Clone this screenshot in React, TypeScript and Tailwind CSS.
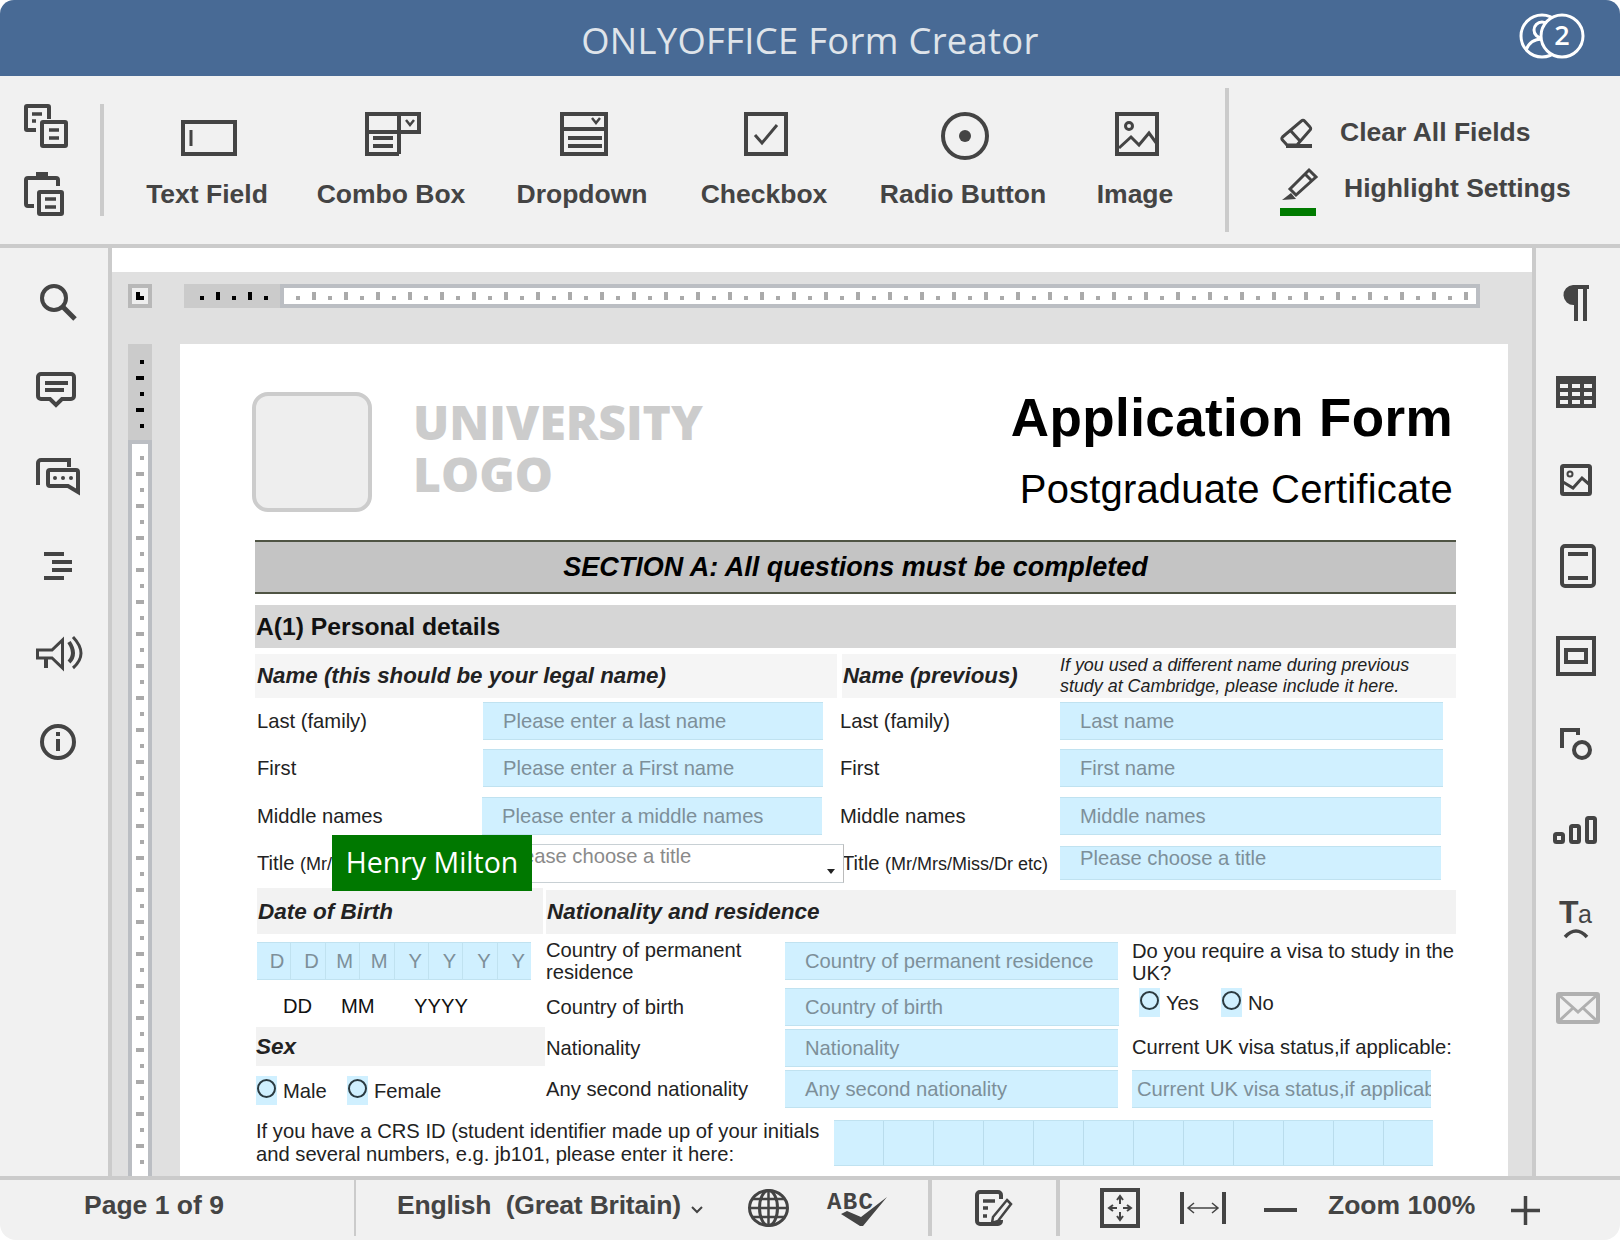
import React from 'react';

const sans = "font-['Liberation_Sans',Arial,sans-serif]";
const open = "font-['Open_Sans',sans-serif]";
const toolLabel = 'text-[26.5px] leading-[32px] font-bold text-[#444] whitespace-nowrap';

const Icon: React.FC<{ w: number; h: number; className?: string; children: React.ReactNode }> = ({ w, h, className, children }) => (
  <svg width={w} height={h} viewBox={`0 0 ${w} ${h}`} fill="none" stroke="#444" strokeWidth={4} className={`block shrink-0 overflow-visible ${className ?? ''}`}>
    {children}
  </svg>
);

const Field: React.FC<{ text?: string; className: string; textClass?: string }> = ({ text, className, textClass }) => (
  <div className={`h-[38px] flex items-center bg-[#d0f0ff] border-y border-[#c0e2f0] text-[20.2px] text-[#7d8f99] whitespace-nowrap overflow-hidden shrink-0 ${className} ${textClass ?? 'pl-5'}`}>
    {text}
  </div>
);

const Radio: React.FC<{ label: string; gap: string }> = ({ label, gap }) => (
  <div className={`flex items-center ${gap}`}>
    <div className="w-[21px] h-[29px] bg-[#d0f0ff] flex items-center justify-center shrink-0">
      <div className="w-[19px] h-[19px] rounded-full border-2 border-[#2b3a40] -mt-1" />
    </div>
    <span className="ml-[6px] text-[20.2px] text-[#222] mt-[1px]">{label}</span>
  </div>
);

const Ticks: React.FC<{ count: number; color: string; vertical?: boolean }> = ({ count, color, vertical }) => (
  <>
    {Array.from({ length: count }, (_, i) => (
      <div
        key={i}
        className="shrink-0"
        style={
          vertical
            ? { width: i % 2 ? 8 : 4, height: 4, background: color }
            : { width: 4, height: i % 2 ? 8 : 4, background: color }
        }
      />
    ))}
  </>
);

const ToolButton: React.FC<{ label: string; width: string; icon: React.ReactNode }> = ({ label, width, icon }) => (
  <div className={`flex flex-col items-center shrink-0 ${width}`}>
    <div className="h-[44px] flex items-end justify-center pl-[3px]">{icon}</div>
    <div className="mt-[22px]">
      <span className={toolLabel}>{label}</span>
    </div>
  </div>
);

const leftIcons = [
  <Icon w={36} h={36} key="search"><circle cx="14" cy="14" r="12" /><path d="M22.5 22.5L35 35" strokeWidth={5} /></Icon>,
  <Icon w={40} h={36} className="-ml-1" key="comment">
    <path d="M5 2h30a3 3 0 0 1 3 3v19a3 3 0 0 1-3 3h-9l-6 6-6-6H5a3 3 0 0 1-3-3V5a3 3 0 0 1 3-3z" />
    <path d="M9 11h23M9 18h19" />
  </Icon>,
  <Icon w={44} h={40} key="chat">
    <path d="M2 27V5a3 3 0 0 1 3-3h28v7" />
    <path d="M12 14a2 2 0 0 1 2-2h26a2 2 0 0 1 2 2v20l-10-6H14a2 2 0 0 1-2-2z" />
    <circle cx="19" cy="20" r="2" fill="#444" stroke="none" />
    <circle cx="27" cy="20" r="2" fill="#444" stroke="none" />
    <circle cx="35" cy="20" r="2" fill="#444" stroke="none" />
  </Icon>,
  <Icon w={28} h={28} key="nav"><path d="M0 2h20M8 10h20M8 18h20M0 26h20" /></Icon>,
  <Icon w={48} h={36} className="ml-1" key="speaker">
    <path d="M1.5 14H16L26.5 4V32L16 22H1.5Z" strokeWidth={3} strokeLinejoin="miter" />
    <path d="M10 22V32" strokeWidth={4} />
    <path d="M33 6Q41 18 33 26" strokeWidth={4} />
    <path d="M37 1Q53 18 37 32" strokeWidth={3} />
  </Icon>,
  <Icon w={36} h={36} key="info">
    <circle cx="18" cy="18" r="16" />
    <path d="M18 8v4M18 15v12" />
  </Icon>,
];

const rightIcons = [
  <Icon w={28} h={36} className="-ml-[6px] -mt-[3px]" key="para">
    <path d="M12 0H28V4H26V36H22V4H17V36H13V20A10 10 0 0 1 12 0Z" fill="#444" stroke="none" />
  </Icon>,
  <Icon w={40} h={32} className="-ml-1" key="table">
    <path fillRule="evenodd" d="M0 0H40V32H0ZM4 8V12H12V8ZM16 8V12H24V8ZM28 8V12H36V8ZM4 16V20H12V16ZM16 16V20H24V16ZM28 16V20H36V16ZM4 24V28H12V24ZM16 24V28H24V24ZM28 24V28H36V24Z" fill="#444" stroke="none" />
  </Icon>,
  <Icon w={32} h={32} className="-ml-1" key="image">
    <rect x="2" y="2" width="28" height="28" rx="1.5" />
    <circle cx="10" cy="10" r="2.5" strokeWidth={2} />
    <path d="M3 18L13 24L22 14L30 21" strokeWidth={3} />
  </Icon>,
  <Icon w={36} h={44} className="-mt-[4px]" key="header">
    <rect x="2" y="2" width="32" height="40" rx="3" />
    <path d="M8 10H28M8 34H28" />
  </Icon>,
  <Icon w={40} h={40} className="-ml-1" key="frame">
    <rect x="2" y="2" width="36" height="36" />
    <rect x="10" y="14" width="20" height="12" />
  </Icon>,
  <Icon w={32} h={32} className="-ml-1" key="shape">
    <path d="M2 20V2H18V7" />
    <circle cx="22" cy="22" r="8" />
  </Icon>,
  <Icon w={44} h={28} className="-ml-[7px] -mt-[5px]" key="chart">
    <rect x="2" y="18" width="8" height="8" rx="1.5" />
    <rect x="18" y="10" width="8" height="16" rx="1.5" />
    <rect x="34" y="2" width="8" height="24" rx="1.5" />
  </Icon>,
  <Icon w={32} h={40} className="-ml-1 -mt-[4px]" key="ta">
    <text x="-1" y="25" fontSize="32" fontWeight="700" fill="#444" stroke="none" className={sans}>T</text>
    <text x="18" y="25" fontSize="25" fill="#444" stroke="none" className={sans}>a</text>
    <path d="M5 39Q16 27 27 39" strokeWidth={3.5} />
  </Icon>,
  <Icon w={44} h={32} key="mail">
    <g stroke="#b0b0b0">
      <rect x="2" y="2" width="40" height="28" rx="1" />
      <path d="M3 3L22 20L41 3M3 29L17 16M41 29L27 16" strokeWidth={3} />
    </g>
  </Icon>,
];

export default function App() {
  return (
    <div className={`w-[1624px] h-[1240px] bg-white overflow-hidden ${sans}`}>
      <div className="w-[1620px] h-full flex flex-col rounded-t-[14px] rounded-b-[16px] overflow-hidden">
        {/* Title */}
        <div className="h-[76px] bg-[#486a95] flex items-center justify-center relative shrink-0">
          <span className={`${open} font-medium text-[36.4px] text-[#dfe4ea] tracking-[0.3px] mt-[4px]`}>ONLYOFFICE Form Creator</span>
          <svg width="66" height="46" viewBox="0 0 66 46" fill="none" stroke="#fff" strokeWidth="3" className="absolute right-[35px] top-[13px]">
            <circle cx="23" cy="23" r="21" />
            <circle cx="23" cy="17" r="8" />
            <path d="M7 37c3-8 9-11 16-11s12 3 15 9" />
            <circle cx="43" cy="23" r="21" fill="#486a95" />
            <text x="43" y="32" fontSize="27" fontWeight="600" textAnchor="middle" fill="#fff" stroke="none" className={open}>2</text>
          </svg>
        </div>

        {/* Toolbar */}
        <div className="h-[172px] bg-[#f1f1f1] border-b-4 border-[#cbcbcb] flex shrink-0">
          <div className="w-[100px] pt-[28px] pl-[24px] shrink-0">
            <Icon w={44} h={44}>
              <path d="M12 26H3a1 1 0 0 1-1-1V3a1 1 0 0 1 1-1h21a1 1 0 0 1 1 1v12" />
              <rect x="18" y="18" width="24" height="24" rx="1" />
              <path d="M8 10H18M8 17H12M25 26H35M25 34H35" strokeWidth={3.5} />
            </Icon>
            <Icon w={40} h={44} className="mt-[24px]">
              <path d="M10 34H4a2 2 0 0 1-2-2V8a2 2 0 0 1 2-2h28a2 2 0 0 1 2 2v6M12 2H24" />
              <rect x="15" y="20" width="23" height="22" rx="1" />
              <path d="M21 27H32M21 35H32" strokeWidth={3.5} />
            </Icon>
          </div>
          <div className="w-1 h-[112px] mt-[28px] bg-[#cbcbcb] shrink-0" />
          <div className="flex ml-[13px] pt-[36px]">
            <ToolButton
              label="Text Field"
              width="w-[180px]"
              icon={
                <Icon w={56} h={36}>
                  <rect x="2" y="2" width="52" height="32" />
                  <path d="M10 10V26" strokeWidth={3} />
                </Icon>
              }
            />
            <ToolButton
              label="Combo Box"
              width="w-[188px]"
              icon={
                <Icon w={56} h={44}>
                  <path d="M34 42H2V2H54V20H2M34 2V42" />
                  <path d="M8 26H28M8 34H28" />
                  <path d="M41 8L45 13L49 8" strokeWidth={2.5} />
                </Icon>
              }
            />
            <ToolButton
              label="Dropdown"
              width="w-[194px]"
              icon={
                <Icon w={48} h={44}>
                  <rect x="2" y="2" width="44" height="40" />
                  <path d="M2 17H46M8 26H42M8 34H42" />
                  <path d="M32 6L36 11L40 6" strokeWidth={2.5} />
                </Icon>
              }
            />
            <ToolButton
              label="Checkbox"
              width="w-[170px]"
              icon={
                <Icon w={44} h={44}>
                  <rect x="2" y="2" width="40" height="40" />
                  <path d="M11 23L18 31L33 13" strokeWidth={3} />
                </Icon>
              }
            />
            <ToolButton
              label="Radio Button"
              width="w-[228px]"
              icon={
                <Icon w={48} h={48} className="-mb-1">
                  <circle cx="24" cy="24" r="22" />
                  <circle cx="24" cy="24" r="6" fill="#444" stroke="none" />
                </Icon>
              }
            />
            <ToolButton
              label="Image"
              width="w-[116px]"
              icon={
                <Icon w={44} h={44}>
                  <rect x="2" y="2" width="40" height="40" />
                  <circle cx="14" cy="14" r="3.5" strokeWidth={3} />
                  <path d="M4 36L16 25L24 33L34 21L42 32" strokeWidth={3} />
                </Icon>
              }
            />
          </div>
          <div className="w-1 h-[144px] mt-[12px] ml-[32px] bg-[#cbcbcb] shrink-0" />
          <div className="pl-[52px] pt-[42px]">
            <div className="flex items-center h-[30px]">
              <Icon w={32} h={30} className="-ml-px">
                <path d="M21.5 3a2 2 0 0 1 3 0L30 9a2 2 0 0 1 0 3L17 27H7L2.5 22a2 2 0 0 1 0-3Z" strokeWidth={3} />
                <path d="M10 12L20 23" strokeWidth={3} />
                <path d="M6 28H32" strokeWidth={4} />
              </Icon>
              <span className={`${toolLabel} ml-[28px] -mt-[2px]`}>Clear All Fields</span>
            </div>
            <div className="flex h-[32px] mt-[20px] ml-[3px]">
              <Icon w={36} h={32} className="-ml-[2px]">
                <path d="M27 2L34 9L14 27L8 21Z" strokeWidth={3} />
                <path d="M23 6L30 13" strokeWidth={3} />
                <path d="M0 32L9 25L14 31Z" fill="#444" stroke="none" />
              </Icon>
              <span className={`${toolLabel} ml-[26px] mt-[4px]`}>Highlight Settings</span>
            </div>
            <div className="w-[36px] h-2 bg-[#007b00] mt-2 -ml-px" />
          </div>
        </div>

        {/* Middle */}
        <div className="h-[928px] flex shrink-0 overflow-hidden">
          <div className="w-[112px] bg-[#f1f1f1] border-r-4 border-[#cbcbcb] pt-[10px] shrink-0">
            {leftIcons.map((icon, i) => (
              <div key={i} className="h-[88px] flex items-center justify-center pl-2">
                {icon}
              </div>
            ))}
          </div>

          <div className="w-[1420px] flex flex-col shrink-0">
            <div className="h-6 bg-white shrink-0" />
            <div className="flex-1 bg-[#e0e0e0] flex flex-col min-h-0">
              {/* Horizontal ruler */}
              <div className="flex h-6 mt-3 ml-4 shrink-0">
                <div className="w-6 h-6 bg-[#b8b8b8] p-1">
                  <div className="w-4 h-4 bg-[#eee] relative">
                    <svg width="16" height="16" viewBox="0 0 16 16" className="block">
                      <path d="M4 4H8V8H12V12H4Z" fill="#000" />
                    </svg>
                  </div>
                </div>
                <div className="ml-8 w-24 h-6 bg-[#cbcbcb] flex items-end gap-3 pl-4 pb-2">
                  <Ticks count={5} color="#000" />
                </div>
                <div className="w-[1200px] h-6 bg-white border-4 border-[#bbbec3] flex items-end gap-3 pl-3 pb-1 overflow-hidden">
                  <Ticks count={74} color="#aaa" />
                </div>
              </div>

              <div className="flex mt-9 ml-4 flex-1 min-h-0">
                {/* Vertical ruler */}
                <div className="w-6 flex flex-col shrink-0">
                  <div className="h-24 bg-[#cbcbcb] flex flex-col items-end gap-3 pt-4 pr-2 shrink-0">
                    <Ticks count={5} color="#000" vertical />
                  </div>
                  <div className="flex-1 min-h-0 bg-white border-x-4 border-t-4 border-[#bbbec3] flex flex-col items-end gap-3 pt-3 pr-1 overflow-hidden">
                    <Ticks count={45} color="#aaa" vertical />
                  </div>
                </div>

                {/* Page */}
                <div className="w-[1328px] ml-7 bg-white pl-[72px] pt-12 overflow-hidden shrink-0">
                  <div className="flex h-[120px] w-[1208px]">
                    <div className="w-[120px] h-[120px] rounded-2xl border-4 border-[#ccc] bg-[#eee] shrink-0" />
                    <div className={`ml-[41px] ${open} font-extrabold text-[48px] leading-[52px] text-[#ccc] pt-[4px]`}>
                      <div>UNIVERSITY</div>
                      <div>LOGO</div>
                    </div>
                    <div className="ml-auto pr-[7px] text-right">
                      <div className="text-[53px] leading-[60px] font-bold text-black -mt-[4px] tracking-[0.4px]">Application Form</div>
                      <div className="text-[40px] leading-[46px] text-black mt-[18px] tracking-[0.17px]">Postgraduate Certificate</div>
                    </div>
                  </div>

                  <div className="ml-[3px] w-[1201px]">
                    <div className="mt-7 h-[54px] pt-px bg-[#c4c4c4] border-y-2 border-[#4f5444] flex items-center justify-center text-[27px] font-bold italic text-black">
                      SECTION A: All questions must be completed
                    </div>
                    <div className="mt-[11px] h-[43px] bg-[#d6d6d6] flex items-center pl-px pt-px text-[24.7px] font-bold text-[#111]">
                      A(1) Personal details
                    </div>

                    {/* Name headers */}
                    <div className="mt-[6px] h-[44px] flex gap-[5px] text-[22.3px] font-bold italic text-[#222]">
                      <div className="w-[582px] bg-[#f5f5f5] flex items-center pl-[2px]">Name (this should be your legal name)</div>
                      <div className="w-[614px] bg-[#f5f5f5] flex items-center pl-px">
                        <span className="w-[217px] shrink-0">Name (previous)</span>
                        <span className="text-[17.9px] leading-[21px] font-normal">
                          If you used a different name during previous
                          <br />
                          study at Cambridge, please include it here.
                        </span>
                      </div>
                    </div>

                    {/* Name rows */}
                    <div className="mt-[4px] ml-[2px] flex flex-col text-[20.2px] text-[#222]">
                      <div className="flex items-center">
                        <span className="w-[226px] shrink-0">Last (family)</span>
                        <Field text="Please enter a last name" className="w-[340px]" />
                        <span className="w-[220px] ml-[17px] shrink-0">Last (family)</span>
                        <Field text="Last name" className="w-[383px]" />
                      </div>
                      <div className="flex items-center mt-[9px]">
                        <span className="w-[226px] shrink-0">First</span>
                        <Field text="Please enter a First name" className="w-[340px]" />
                        <span className="w-[220px] ml-[17px] shrink-0">First</span>
                        <Field text="First name" className="w-[383px]" />
                      </div>
                      <div className="flex items-center mt-[10px]">
                        <span className="w-[225px] shrink-0">Middle names</span>
                        <Field text="Please enter a middle names" className="w-[340px]" />
                        <span className="w-[220px] ml-[18px] shrink-0">Middle names</span>
                        <Field text="Middle names" className="w-[381px]" />
                      </div>
                    </div>

                    {/* Title row */}
                    <div className="mt-[9px] ml-[2px] flex h-[39px] relative text-[20.2px] text-[#222]">
                      <span className="w-[226px] shrink-0 leading-[39px]">
                        Title <span className="text-[18px]">(Mr/Mrs/Miss/Dr etc)</span>
                      </span>
                      <div className="w-[361px] h-[39px] bg-white border border-[#c8d0d4] border-x-0 border-r border-r-[#bbb] pl-[22px] text-[#8a8a8a] relative leading-[22px] shrink-0">
                        Please choose a title
                        <svg width="8" height="5" viewBox="0 0 8 5" className="absolute right-[8px] bottom-[8px]">
                          <path d="M0 0H8L4 5Z" fill="#222" />
                        </svg>
                      </div>
                      <span className="w-[218px] shrink-0 leading-[39px] -ml-[2px]">
                        Title <span className="text-[18px]">(Mr/Mrs/Miss/Dr etc)</span>
                      </span>
                      <div className="w-[381px] h-[34px] mt-[2px] bg-[#d0f0ff] border-y border-[#c0e2f0] pl-5 text-[#7d8f99] leading-[22px] shrink-0">
                        Please choose a title
                      </div>
                      <div className={`absolute left-[75px] -top-[9px] w-[200px] h-[56px] bg-[#007800] pb-[2px] ${open} text-[28.5px] text-white flex items-center justify-center`}>
                        Henry Milton
                      </div>
                    </div>

                    {/* Second headers */}
                    <div className="mt-[5px] h-[46px] flex text-[22.5px] font-bold italic text-[#222]">
                      <div className="w-[286px] ml-[2px] pt-[2px] bg-[#f2f2f2] flex items-center pl-px shrink-0">Date of Birth</div>
                      <div className="flex-1 ml-[3px] mt-[2px] bg-[#f2f2f2] flex items-center pl-px">Nationality and residence</div>
                    </div>

                    {/* Three columns */}
                    <div className="mt-2 flex text-[20.2px] text-[#222]">
                      <div className="w-[291px] shrink-0">
                        <div className="ml-[2px] w-[274px] h-[38px] bg-[#d0f0ff] border-y border-[#c0e2f0] flex text-[#7d8f99]">
                          {['D', 'D', 'M', 'M', 'Y', 'Y', 'Y', 'Y'].map((c, i) => (
                            <div key={i} className="flex-1 flex items-center justify-end pr-[6px] border-r border-[#c0e2f0] last:border-r-0">
                              {c}
                            </div>
                          ))}
                        </div>
                        <div className="h-[47px] flex items-center pt-[5px] pl-[28px] text-[#111]">
                          <span className="w-[58px]">DD</span>
                          <span className="w-[73px]">MM</span>
                          <span>YYYY</span>
                        </div>
                        <div className="ml-px w-[289px] h-[39px] pt-px bg-[#f2f2f2] flex items-center text-[22.5px] font-bold italic">Sex</div>
                        <div className="mt-[9px] ml-px flex">
                          <Radio label="Male" gap="w-[91px]" />
                          <Radio label="Female" gap="" />
                        </div>
                      </div>

                      <div className="w-[586px] shrink-0 flex flex-col">
                        <div className="flex items-center h-[38px]">
                          <span className="w-[239px] leading-[22px] shrink-0 -mt-px">Country of permanent residence</span>
                          <Field text="Country of permanent residence" className="w-[333px]" />
                        </div>
                        <div className="flex items-center h-[38px] mt-2">
                          <span className="w-[239px] shrink-0">Country of birth</span>
                          <Field text="Country of birth" className="w-[334px]" />
                        </div>
                        <div className="flex items-center h-[38px] mt-[3px]">
                          <span className="w-[239px] shrink-0">Nationality</span>
                          <Field text="Nationality" className="w-[333px]" />
                        </div>
                        <div className="flex items-center h-[38px] mt-[3px]">
                          <span className="w-[239px] shrink-0">Any second nationality</span>
                          <Field text="Any second nationality" className="w-[333px]" />
                        </div>
                      </div>

                      <div className="flex-1 min-w-0 flex flex-col">
                        <div className="leading-[22px] h-[47px] -mt-[2px] whitespace-nowrap">
                          Do you require a visa to study in the
                          <br />
                          UK?
                        </div>
                        <div className="flex ml-[7px]">
                          <Radio label="Yes" gap="w-[82px]" />
                          <Radio label="No" gap="" />
                        </div>
                        <div className="h-[39px] mt-[9px] flex items-center whitespace-nowrap">Current UK visa status,if applicable:</div>
                        <Field text="Current UK visa status,if applicable:" className="w-[299px] mt-1" textClass="pl-[5px]" />
                      </div>
                    </div>

                    {/* CRS */}
                    <div className="mt-3 flex text-[20.2px] text-[#222] leading-[23px]">
                      <div className="w-[578px] shrink-0 ml-px whitespace-nowrap">
                        If you have a CRS ID (student identifier made up of your initials
                        <br />
                        and several numbers, e.g. jb101, please enter it here:
                      </div>
                      <div className="w-[599px] h-[46px] bg-[#d0f0ff] border-y border-[#c0e2f0] flex shrink-0">
                        {Array.from({ length: 12 }, (_, i) => (
                          <div key={i} className="flex-1 border-r border-[#b9dcec] last:border-r-0" />
                        ))}
                      </div>
                    </div>
                  </div>
                </div>
              </div>
            </div>
          </div>

          <div className="w-[88px] bg-[#f1f1f1] border-l-4 border-[#cbcbcb] pt-[12px] shrink-0">
            {rightIcons.map((icon, i) => (
              <div key={i} className="h-[88px] flex items-center justify-center">
                {icon}
              </div>
            ))}
          </div>
        </div>

        {/* Status bar */}
        <div className="h-[64px] bg-[#f1f1f1] border-t-4 border-[#cbcbcb] flex shrink-0 text-[26.5px] font-bold text-[#444]">
          <div className="w-[356px] h-[56px] flex items-center pl-[84px] pb-1 border-r-2 border-[#cbcbcb] shrink-0 whitespace-nowrap">Page 1 of 9</div>
          <div className="flex items-center pl-[41px] w-[576px] shrink-0 h-[56px] border-r-4 border-[#cbcbcb] whitespace-pre">
            <span className="-mt-1 tracking-[-0.2px]">English  (Great Britain)</span>
            <svg width="12" height="8" viewBox="0 0 12 8" fill="none" stroke="#444" strokeWidth="2" className="ml-[10px] mt-1 shrink-0">
              <path d="M1 1L6 6L11 1" />
            </svg>
            <Icon w={41} h={38} className="ml-[45px]">
              <g strokeWidth={3}>
                <ellipse cx="20.5" cy="19" rx="19" ry="17.5" />
                <ellipse cx="20.5" cy="19" rx="9" ry="17.5" />
                <path d="M20.5 1V37M2 19H39M5 10H36M5 28H36" strokeWidth={2.5} />
              </g>
            </Icon>
            <Icon w={60} h={36} className="ml-[38px]">
              <text x="0" y="19" fontSize="24" fontWeight="700" fill="#444" stroke="none" className="font-['Liberation_Mono',monospace]" textLength="46">ABC</text>
              <path d="M14 24L20 21L34 27L60 7L36 36H33Z" fill="#444" stroke="none" />
            </Icon>
          </div>
          <div className="flex items-center pl-[43px] w-[128px] h-[56px] border-r-4 border-[#cbcbcb] shrink-0">
            <Icon w={37} h={36}>
              <path d="M26 9V5a3 3 0 0 0-3-3H5a3 3 0 0 0-3 3v26a3 3 0 0 0 3 3h18a3 3 0 0 0 3-3v-1" strokeWidth={4} />
              <path d="M8 11H20M8 18H13M8 26H12" strokeWidth={3.5} />
              <path d="M32 10L36 14L23 31L17 33L18 27Z" strokeWidth={2.5} />
            </Icon>
          </div>
          <div className="flex items-center h-[56px] pl-[40px]">
            <Icon w={40} h={40}>
              <rect x="2" y="2" width="36" height="36" />
              <g strokeWidth={2}>
                <path d="M20 9V16M17 12L20 8L23 12M20 31V24M17 28L20 32L23 28M10 20H17M13 17L9 20L13 23M30 20H23M27 17L31 20L27 23" />
              </g>
            </Icon>
            <Icon w={46} h={32} className="ml-[40px]">
              <path d="M2 0V32M44 0V32" strokeWidth={4} />
              <path d="M9 16H37M14 11L8 16L14 21M32 11L38 16L32 21" strokeWidth={1.5} />
            </Icon>
            <div className="w-[33px] h-1 bg-[#444] ml-[38px] mt-1 shrink-0" />
            <span className="ml-[31px] whitespace-nowrap -mt-1">Zoom 100%</span>
            <Icon w={29} h={29} className="ml-[36px] mt-1">
              <path d="M14.5 0V29M0 14.5H29" strokeWidth={3.5} />
            </Icon>
          </div>
        </div>
      </div>
    </div>
  );
}
